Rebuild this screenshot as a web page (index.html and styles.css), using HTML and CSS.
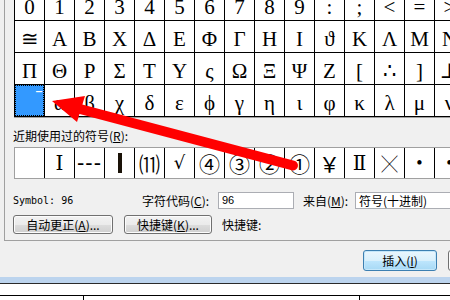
FILE: index.html
```html
<!DOCTYPE html>
<html>
<head>
<meta charset="utf-8">
<link rel="stylesheet" href="styles.css">
</head>
<body>
<div class="screen">
  <div class="dialog">
    <div class="panel">
      <div class="charmap">
        <span>0</span><span>1</span><span>2</span><span>3</span><span>4</span><span>5</span><span>6</span><span>7</span><span>8</span><span>9</span><span>:</span><span>;</span><span>&lt;</span><span>=</span><span>&gt;</span><span>?</span>
        <span>≅</span><span>Α</span><span>Β</span><span>Χ</span><span>Δ</span><span>Ε</span><span>Φ</span><span>Γ</span><span>Η</span><span>Ι</span><span>ϑ</span><span>Κ</span><span>Λ</span><span>Μ</span><span>Ν</span><span>Ο</span>
        <span>Π</span><span>Θ</span><span>Ρ</span><span>Σ</span><span>Τ</span><span>Υ</span><span>ς</span><span>Ω</span><span>Ξ</span><span>Ψ</span><span>Ζ</span><span>[</span><span>∴</span><span>]</span><span>⊥</span><span>_</span>
        <span class="sel"><i class="ext">‾</i></span><span>α</span><span>β</span><span>χ</span><span>δ</span><span>ε</span><span>ϕ</span><span>γ</span><span>η</span><span>ι</span><span>φ</span><span>κ</span><span>λ</span><span>μ</span><span>ν</span><span>ο</span>
      </div>
      <div class="recent-label">近期使用过的符号(<u>R</u>):</div>
      <div class="recent">
        <span></span>
        <span class="serif big">Ⅰ</span>
        <span class="dash">---</span>
        <span><b class="bar"></b></span>
        <span class="cjk">⑾</span>
        <span class="serif">√</span>
        <span class="cjk">④</span>
        <span class="cjk">③</span>
        <span class="cjk">②</span>
        <span class="cjk">①</span>
        <span class="cjk">￥</span>
        <span class="serif big">Ⅱ</span>
        <span class="cjk cross">╳</span>
        <span class="dot">•</span>
        <span class="dot">•</span>
        <span></span>
      </div>
      <div class="info">
        <span class="sym">Symbol: 96</span>
        <span class="lbl code-lbl">字符代码(<u>C</u>):</span>
        <span class="field code">96</span>
        <span class="lbl from-lbl">来自(<u>M</u>):</span>
        <span class="field from">符号(十进制)</span>
      </div>
      <div class="actions">
        <button class="btn auto">自动更正(<u>A</u>)...</button>
        <button class="btn keys">快捷键(<u>K</u>)...</button>
        <span class="lbl">快捷键:</span>
      </div>
    </div>
    <div class="footer">
      <button class="btn default">插入(<u>I</u>)</button>
      <button class="btn cancel">取消</button>
    </div>
  </div>
  <div class="frame"></div>
  <div class="doc">
    <div class="table"><div class="td"></div><div class="td"></div><div class="td"></div></div>
  </div>
  <svg class="arrow" width="450" height="300" viewBox="0 0 450 300">
    <line x1="80" y1="109" x2="293" y2="165.5" stroke="#ff0000" stroke-width="10" stroke-linecap="round"/>
    <polygon points="52,101 85,96 77,122" fill="#ff0000"/>
  </svg>
</div>
</body>
</html>
```

FILE: styles.css
```css
body {
  margin: 0;
  background: #f0f0f0;
  font-family: "Noto Sans CJK SC", sans-serif;
  color: #000;
}

.screen {
  position: relative;
  width: 450px;
  height: 300px;
  overflow: hidden;
}

.dialog {
  width: 540px;
  background: #f0f0f0;
}

.panel {
  display: flex;
  flex-direction: column;
  align-items: flex-start;
  margin-left: 4px;
  border-left: 1px solid #a0a0a0;
  border-bottom: 1px solid #a0a0a0;
  padding-left: 9px;
  height: 241px;
  box-sizing: border-box;
}

.charmap {
  margin-top: -12px;
  display: grid;
  grid-template-columns: repeat(16, 29px);
  grid-auto-rows: 31px;
  gap: 1px;
  background: #000;
  border: 1px solid #000;
  box-shadow: 0 1px 0 #a0a0a0;
  font-family: "Liberation Serif", "DejaVu Serif", serif;
  font-size: 21px;
}

.charmap span {
  background: #fff;
  text-align: center;
  padding-top: 6px;
  line-height: 25px;
  overflow: hidden;
}

.charmap .sel {
  background: #3399ff;
  border: 1px dotted #000;
  color: #fff;
  text-align: right;
  padding: 0 1px 0 0;
  line-height: 15px;
}

.ext {
  font-style: normal;
  font-family: "DejaVu Sans", sans-serif;
  font-size: 12px;
  font-weight: bold;
}

.recent-label {
  margin: 12px 0 0 -1px;
  font-size: 12px;
  line-height: 14px;
}

.recent {
  margin-top: 4px;
  display: grid;
  grid-template-columns: repeat(16, 29px);
  grid-template-rows: 30px;
  column-gap: 1px;
  background: #000;
  border: 1px solid #a0a0a0;
}

.recent span {
  background: #fff;
  display: flex;
  align-items: center;
  justify-content: center;
  font-size: 20px;
  line-height: 1;
}

.recent .serif {
  font-family: "DejaVu Serif", "Liberation Serif", serif;
  font-size: 18px;
}

.recent .big {
  font-size: 20px;
}

.recent .dash {
  font-family: "Liberation Sans", sans-serif;
  font-size: 22px;
  letter-spacing: 1px;
}

.recent .cjk {
  font-family: "Noto Sans CJK SC", sans-serif;
  font-size: 21px;
}

.recent .cross {
  font-size: 16px;
}

.recent .dot {
  font-family: "Liberation Serif", serif;
  font-size: 18px;
}

.bar {
  display: block;
  width: 4px;
  height: 20px;
  background: #1a1208;
}

.info {
  margin: 13px 0 0 -1px;
  display: flex;
  align-items: center;
  height: 17px;
}

.sym {
  width: 129px;
  font-family: "DejaVu Sans Mono", monospace;
  font-size: 10px;
}

.lbl {
  font-size: 12px;
  line-height: 14px;
}

.code-lbl {
  width: 76px;
}

.from-lbl {
  margin-left: 9px;
  width: 52px;
}

.field {
  height: 17px;
  box-sizing: border-box;
  border: 1px solid #abadb3;
  background: #fff;
  padding-left: 3px;
  line-height: 15px;
}

.code {
  width: 76px;
  font-family: "Liberation Sans", sans-serif;
  font-size: 11px;
}

.from {
  width: 130px;
  font-size: 12px;
}

.actions {
  margin: 6px 0 0 -1px;
  display: flex;
  align-items: center;
}

.btn {
  height: 19px;
  box-sizing: border-box;
  border: 1px solid #707070;
  border-radius: 3px;
  background: linear-gradient(#f2f2f2 0%, #ebebeb 50%, #dddddd 51%, #cfcfcf 100%);
  box-shadow: inset 0 0 0 1px #fcfcfc;
  font-family: "Noto Sans CJK SC", sans-serif;
  font-size: 12px;
  line-height: 15px;
  padding: 0;
  color: #000;
}

.auto {
  width: 100px;
  margin-right: 11px;
}

.keys {
  width: 88px;
  margin-right: 10px;
}

.footer {
  height: 36px;
  box-sizing: border-box;
  padding: 9px 18px 0 0;
  display: flex;
  justify-content: flex-end;
  align-items: flex-start;
  gap: 11px;
}

.footer .btn {
  width: 74px;
  height: 21px;
}

.footer .default {
  border-color: #3c7fb1;
  background: linear-gradient(#eaf6fd 0%, #d9f0fc 50%, #bee6fd 51%, #a7d9f5 100%);
  box-shadow: inset 0 0 0 1px #c5e7fa;
}

.frame {
  height: 6px;
  background: #bcd4ee;
  border-bottom: 1px solid #2a2a2a;
}

.doc {
  height: 16px;
  background: #fff;
  padding-top: 11px;
  box-sizing: border-box;
}

.table {
  display: grid;
  grid-template-columns: 83px 276px 1fr;
  border-top: 1px solid #000;
  height: 5px;
}

.td + .td {
  border-left: 1px solid #000;
}

.arrow {
  position: absolute;
  left: 0;
  top: 0;
  pointer-events: none;
}
```
